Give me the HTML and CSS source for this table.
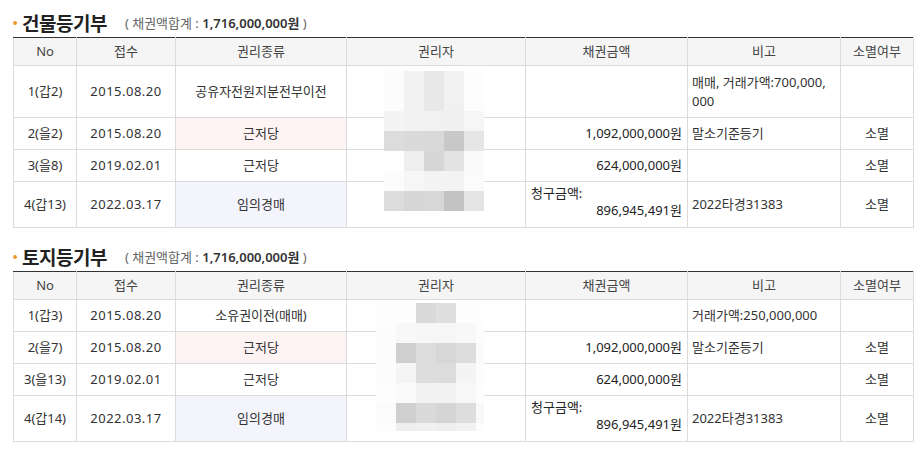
FILE: index.html
```html
<!DOCTYPE html>
<html lang="ko">
<head>
<meta charset="utf-8">
<title>등기부</title>
<link rel="stylesheet" href="styles.css">
</head>
<body>
<div class="page">
  <section class="reg">
    <h2 class="reg-title"><span class="bullet"></span><span class="name">건물등기부</span><span class="sum">( 채권액합계 : <b>1,716,000,000원</b> )</span></h2>
    <div class="table-wrap">
      <table class="reg-table">
        <colgroup>
          <col class="w-no"><col class="w-date"><col class="w-kind"><col class="w-holder"><col class="w-amt"><col class="w-note"><col class="w-ext">
        </colgroup>
        <thead>
          <tr><th>No</th><th>접수</th><th>권리종류</th><th>권리자</th><th>채권금액</th><th>비고</th><th>소멸여부</th></tr>
        </thead>
        <tbody>
          <tr class="tall"><td>1(갑2)</td><td class="date">2015.08.20</td><td>공유자전원지분전부이전</td><td></td><td class="amt"></td><td class="note">매매, 거래가액:700,000,<br>000</td><td></td></tr>
          <tr><td>2(을2)</td><td class="date">2015.08.20</td><td class="pink">근저당</td><td></td><td class="amt">1,092,000,000원</td><td class="note">말소기준등기</td><td>소멸</td></tr>
          <tr><td>3(을8)</td><td class="date">2019.02.01</td><td>근저당</td><td></td><td class="amt">624,000,000원</td><td class="note"></td><td>소멸</td></tr>
          <tr class="claim-row"><td>4(갑13)</td><td class="date">2022.03.17</td><td class="lav">임의경매</td><td></td><td class="amt claim"><div class="claim-label">청구금액:</div><div>896,945,491원</div></td><td class="note">2022타경31383</td><td>소멸</td></tr>
        </tbody>
      </table>
      <div class="mosaic m1">
        <i class="c-fc"></i><i class="c-f2"></i><i class="c-e8"></i><i class="c-f1"></i><i class="c-fd"></i>
        <i class="c-fc"></i><i class="c-f2"></i><i class="c-e8"></i><i class="c-f1"></i><i class="c-fd"></i>
        <i class="c-f4"></i><i class="c-f2"></i><i class="c-f1"></i><i class="c-f0"></i><i class="c-f6"></i>
        <i class="c-dc"></i><i class="c-da"></i><i class="c-d9"></i><i class="c-c8"></i><i class="c-e6"></i>
        <i class="c-fe"></i><i class="c-ee"></i><i class="c-d6"></i><i class="c-e3"></i><i class="c-fa"></i>
        <i class="c-fc"></i><i class="c-f6"></i><i class="c-f3"></i><i class="c-f3"></i><i class="c-fb"></i>
        <i class="c-dc"></i><i class="c-d6"></i><i class="c-d7"></i><i class="c-c3"></i><i class="c-e4"></i>
      </div>
    </div>
  </section>

  <section class="reg">
    <h2 class="reg-title"><span class="bullet"></span><span class="name">토지등기부</span><span class="sum">( 채권액합계 : <b>1,716,000,000원</b> )</span></h2>
    <div class="table-wrap">
      <table class="reg-table">
        <colgroup>
          <col class="w-no"><col class="w-date"><col class="w-kind"><col class="w-holder"><col class="w-amt"><col class="w-note"><col class="w-ext">
        </colgroup>
        <thead>
          <tr><th>No</th><th>접수</th><th>권리종류</th><th>권리자</th><th>채권금액</th><th>비고</th><th>소멸여부</th></tr>
        </thead>
        <tbody>
          <tr><td>1(갑3)</td><td class="date">2015.08.20</td><td>소유권이전(매매)</td><td></td><td class="amt"></td><td class="note">거래가액:250,000,000</td><td></td></tr>
          <tr><td>2(을7)</td><td class="date">2015.08.20</td><td class="pink">근저당</td><td></td><td class="amt">1,092,000,000원</td><td class="note">말소기준등기</td><td>소멸</td></tr>
          <tr><td>3(을13)</td><td class="date">2019.02.01</td><td>근저당</td><td></td><td class="amt">624,000,000원</td><td class="note"></td><td>소멸</td></tr>
          <tr class="claim-row"><td>4(갑14)</td><td class="date">2022.03.17</td><td class="lav">임의경매</td><td></td><td class="amt claim"><div class="claim-label">청구금액:</div><div>896,945,491원</div></td><td class="note">2022타경31383</td><td>소멸</td></tr>
        </tbody>
      </table>
      <div class="mosaic m2">
        <i class="c-fd"></i><i class="c-fd"></i><i class="c-d9"></i><i class="c-df"></i><i class="c-fd"></i><i class="c-fe"></i>
        <i class="c-fc"></i><i class="c-f8"></i><i class="c-f6"></i><i class="c-f6"></i><i class="c-f8"></i><i class="c-fd"></i>
        <i class="c-fb"></i><i class="c-cf"></i><i class="c-dd"></i><i class="c-d7"></i><i class="c-dd"></i><i class="c-fa"></i>
        <i class="c-fc"></i><i class="c-f5"></i><i class="c-dd"></i><i class="c-dc"></i><i class="c-f4"></i><i class="c-fc"></i>
        <i class="c-fd"></i><i class="c-fa"></i><i class="c-f2"></i><i class="c-f2"></i><i class="c-f8"></i><i class="c-fd"></i>
        <i class="c-fb"></i><i class="c-cf"></i><i class="c-d9"></i><i class="c-d5"></i><i class="c-dd"></i><i class="c-f8"></i>
        <i class="c-fc"></i><i class="c-ee"></i><i class="c-f0"></i><i class="c-ee"></i><i class="c-f2"></i><i class="c-fd"></i>
      </div>
    </div>
  </section>
</div>
</body>
</html>
```

FILE: styles.css
```css
* { box-sizing: border-box; }

body {
  margin: 0;
  background: #fff;
  font-family: "Noto Sans", "Noto Sans CJK KR", sans-serif;
  font-size: 13px;
  color: #333;
}

.page {
  padding: 8px 8px 0 13px;
}

.reg + .reg {
  margin-top: 14px;
}

.reg-title {
  display: flex;
  align-items: center;
  height: 29px;
  margin: 0;
  font-weight: normal;
}

.bullet {
  width: 4px;
  height: 4px;
  border-radius: 50%;
  background: #f3982c;
  margin: 0 5px 0 0;
}

.name {
  font-family: "Noto Sans CJK KR", sans-serif;
  font-size: 19px;
  font-weight: 700;
  color: #222;
  letter-spacing: -0.5px;
}

.sum {
  margin-left: 18px;
  font-size: 13px;
  color: #666;
}

.sum b {
  color: #333;
  font-weight: 600;
}

.table-wrap {
  position: relative;
  width: 900px;
}

.reg-table {
  width: 900px;
  table-layout: fixed;
  border-collapse: collapse;
}

.w-no { width: 63px; }
.w-date { width: 99px; }
.w-kind { width: 171px; }
.w-holder { width: 179px; }
.w-amt { width: 162px; }
.w-note { width: 153px; }
.w-ext { width: 73px; }

.reg-table th,
.reg-table td {
  border: 1px solid #dcdcdc;
  padding: 0 4px;
  text-align: center;
  vertical-align: middle;
  line-height: 19px;
  font-weight: normal;
  white-space: nowrap;
}

.reg-table thead th {
  background: #f5f5f5;
  height: 28px;
  color: #444;
  border-top: 1px solid #333;
}

.reg-table tbody td {
  height: 32px;
}

.reg-table tbody tr.tall td {
  height: 52px;
}

.reg-table tbody tr.claim-row td {
  height: 46px;
}

.reg-table td.date {
  letter-spacing: 0.5px;
}

.reg-table td.amt {
  text-align: right;
  padding-right: 5px;
  color: #222;
}

.reg-table td.note {
  text-align: left;
  padding-left: 4px;
}

.reg-table td.claim {
  vertical-align: top;
  padding-top: 3px;
  line-height: 17px;
}

.claim-label {
  text-align: left;
  padding-left: 1px;
}

.reg-table td.pink { background: #fdf3f3; }
.reg-table td.lav { background: #f4f4fd; }

.mosaic {
  position: absolute;
  display: grid;
}

.mosaic i { display: block; }

.m1 {
  left: 371px;
  top: 34px;
  grid-template-columns: repeat(5, 20px);
  grid-auto-rows: 20px;
}

.m2 {
  left: 363px;
  top: 32px;
  grid-template-columns: repeat(5, 20px) 8px;
  grid-template-rows: repeat(6, 20px) 8px;
}

.c-fe { background: #fefefe; }
.c-fd { background: #fdfdfd; }
.c-fc { background: #fcfcfc; }
.c-fb { background: #fbfbfb; }
.c-fa { background: #fafafa; }
.c-f8 { background: #f8f8f8; }
.c-f6 { background: #f6f6f6; }
.c-f5 { background: #f5f5f5; }
.c-f4 { background: #f4f4f4; }
.c-f3 { background: #f3f3f3; }
.c-f2 { background: #f2f2f2; }
.c-f1 { background: #f1f1f1; }
.c-f0 { background: #f0f0f0; }
.c-ee { background: #eeeeee; }
.c-e8 { background: #e8e8e8; }
.c-e6 { background: #e6e6e6; }
.c-e4 { background: #e4e4e4; }
.c-e3 { background: #e3e3e3; }
.c-df { background: #dfdfdf; }
.c-dd { background: #dddddd; }
.c-dc { background: #dcdcdc; }
.c-da { background: #dadada; }
.c-d9 { background: #d9d9d9; }
.c-d7 { background: #d7d7d7; }
.c-d6 { background: #d6d6d6; }
.c-d5 { background: #d5d5d5; }
.c-cf { background: #cfcfcf; }
.c-c8 { background: #c8c8c8; }
.c-c3 { background: #c3c3c3; }
```
